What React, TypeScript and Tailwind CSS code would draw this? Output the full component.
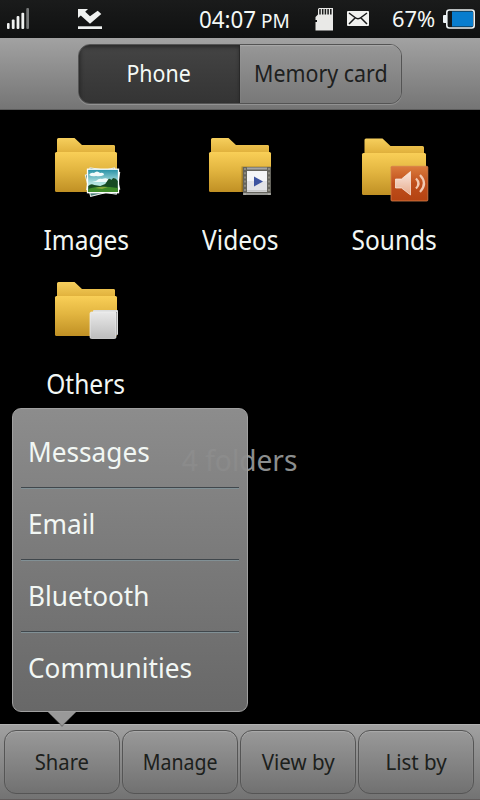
import type { ReactNode } from "react";

function Folder({ uid, tall, children }: { uid: string; tall?: boolean; children: ReactNode }) {
  const b = tall ? 70 : 67;
  const t = tall ? 28 : 27;
  return (
    <svg className="block h-20 w-[120px]" viewBox={tall ? "-5.500 0 120 80" : "-4 0 120 80"} aria-label={uid}>
      <defs>
        <linearGradient id={`${uid}-back`} x1="0" y1="0" x2="0" y2="1">
          <stop offset="0" stopColor="#f6cf5d" />
          <stop offset="0.6" stopColor="#e3b43f" />
          <stop offset="1" stopColor="#c99a30" />
        </linearGradient>
        <linearGradient id={`${uid}-front`} x1="0" y1="0" x2="0" y2="1">
          <stop offset="0" stopColor="#f9cf57" />
          <stop offset="0.45" stopColor="#e2b540" />
          <stop offset="1" stopColor="#c09024" />
        </linearGradient>
      </defs>
      <path
        d={tall ? "M25 15q0-1.500 1.500-1.500H43L51 21H83q1.500 0 1.500 1.500V35H25Z" : "M27 14.500q0-1.500 1.500-1.500H44.500L52 20H84q1 0 1 1.500V35H27Z"}
        fill={`url(#${uid}-back)`}
      />
      <rect x={tall ? 22.5 : 25} y={t} width={tall ? 64 : 62} height={b - t} rx="1.500" fill={`url(#${uid}-front)`} />
      {children}
    </svg>
  );
}

function PhotoBadge() {
  return (
    <g>
      <defs>
        <linearGradient id="sky" x1="0" y1="0" x2="0" y2="1">
          <stop offset="0" stopColor="#238fa5" />
          <stop offset="0.6" stopColor="#b5e5e2" />
        </linearGradient>
      </defs>
      <rect x="57.500" y="46" width="30" height="22" fill="#4a7c78" stroke="#e8ede8" transform="rotate(-14 73 57)" />
      <rect x="58" y="45" width="30" height="22" fill="#4c7a70" stroke="#e8ede8" transform="rotate(9 73 57)" />
      <rect x="57.500" y="44.200" width="31" height="23.500" fill="url(#sky)" stroke="#fff" strokeWidth="1.300" />
      <path d="M59 50q2-3 5-2 3-3 6 0 4-1 4 2-4 2-8 1-4 1-7-1ZM66 56q3-3 6-2 5-2 7 1v2H62Z" fill="#f2fbfa" />
      <path d="M58.200 61q3-3 6-1l6 1 5-2 2-3q2-4 4-1l2-2q3 0 4.600 3V67H58.200Z" fill="#174a22" />
      <path d="M58.200 64q10-4 29.600-1v4H58.200Z" fill="#3e8b28" />
      <path d="M65 63q6-2 13-1l-6 2Z" fill="#87a83b" />
    </g>
  );
}

function FilmBadge() {
  return (
    <g>
      <rect x="57.500" y="41.500" width="31" height="30" fill="#000" opacity="0.250" />
      <rect x="59" y="42" width="28" height="28" fill="#65645d" />
      <path d="M61 43V70M85 43V70" stroke="#99968a" strokeWidth="1.600" strokeDasharray="2 2.200" />
      <rect x="63" y="42.500" width="20" height="2" fill="#a5a5a5" />
      <rect x="63" y="46" width="20" height="19.500" fill="#f4f5f7" />
      <path d="M63 56H83V65.500H63Z" fill="#e2e3e7" />
      <path d="M70 51.500L79 56.500L70 61.500Z" fill="#3d54a0" />
      <path d="M59 69H87M63 66.500H83" stroke="#d0d0d0" />
    </g>
  );
}

function SpeakerBadge() {
  return (
    <g>
      <defs>
        <linearGradient id="orange" x1="0" y1="0" x2="0" y2="1">
          <stop offset="0" stopColor="#dc7c3c" />
          <stop offset="0.5" stopColor="#bf4e1c" />
          <stop offset="1" stopColor="#b44312" />
        </linearGradient>
        <linearGradient id="horn" x1="0" y1="0" x2="0" y2="1">
          <stop offset="0" stopColor="#fae8df" />
          <stop offset="1" stopColor="#e7ab8c" />
        </linearGradient>
      </defs>
      <rect x="51.500" y="41.300" width="36.800" height="34.700" rx="1" fill="url(#orange)" stroke="#d5814c" strokeWidth="0.800" />
      <path d="M56 54H62L71 46.500V70L62 63H56Z" fill="url(#horn)" stroke="#fbeee5" strokeWidth="0.700" />
      <path d="M76.500 53.500q5 5 0 10M80.500 50q8 8.500 0 17" fill="none" stroke="#f2c9b2" strokeWidth="2.200" />
    </g>
  );
}

function PaperBadge() {
  return (
    <g>
      <defs>
        <linearGradient id="paper" x1="0" y1="0" x2="0" y2="1">
          <stop offset="0" stopColor="#e9e9e9" />
          <stop offset="1" stopColor="#bdbdbd" />
        </linearGradient>
      </defs>
      <rect x="63" y="41" width="25" height="25" rx="1" fill="#dcdddd" />
      <path d="M86.500 43V66" stroke="#8c8c8c" />
      <rect x="60" y="43" width="26" height="26.500" rx="1.500" fill="url(#paper)" stroke="#f0f0f0" strokeWidth="0.700" />
    </g>
  );
}

const folders = [
  { name: "Images", badge: <PhotoBadge /> },
  { name: "Videos", badge: <FilmBadge /> },
  { name: "Sounds", badge: <SpeakerBadge />, tall: true },
  { name: "Others", badge: <PaperBadge /> },
];

const menu = ["Messages", "Email", "Bluetooth", "Communities"];

const actions = [
  { name: "Share", fit: "scale-x-[0.940]" },
  { name: "Manage", fit: "scale-x-[0.910]" },
  { name: "View by", fit: "scale-x-[0.955]" },
  { name: "List by", fit: "scale-x-[0.955]" },
];

function StatusBar() {
  return (
    <header className="flex h-[38px] items-center bg-linear-to-b from-[#1a1b1b] to-[#101111] text-[#f4f8f5]">
      <svg className="h-[38px] w-[190px] shrink-0" viewBox="0 0 190 38">
        <g fill="#f0f2f1">
          <rect x="7" y="23" width="2.600" height="6" rx="1" />
          <rect x="11.800" y="19.500" width="2.800" height="9.500" rx="1" />
          <rect x="16.600" y="16" width="2.800" height="13" rx="1" />
          <rect x="21.400" y="12.800" width="2.800" height="16.200" rx="1" />
          <rect x="26.300" y="8" width="2.700" height="21" rx="1" fill="#777979" />
          <path d="M78 9H88L85.200 11.800L90 16.300L97.700 10.800L101.300 14L90 23.700L80.800 15.500L78 18Z" />
          <rect x="78" y="26.300" width="24" height="2.700" />
        </g>
      </svg>
      <div className="flex w-[120px] shrink-0 items-baseline pt-px leading-[38px] whitespace-nowrap">
        <span className="ml-[9px] w-[62px] origin-left scale-x-[0.950] text-[23.500px]">04:07</span>
        <span className="origin-left scale-x-[0.930] text-[20.500px]">PM</span>
      </div>
      <svg className="h-[38px] w-[70px] shrink-0" viewBox="310 0 70 38">
        <path d="M319 8H333V30.500H315.500V22H317V20H315.500V17L318 14.500V9Z" fill="#e9e9e7" />
        <path d="M320 9V14.500M322.700 9V14.500M325.400 9V14.500M328.100 9V14.500M330.800 9V14.500" stroke="#191a1a" strokeWidth="1.500" />
        <rect x="347" y="11" width="22" height="15" rx="1" fill="#f1f1ef" />
        <path d="M349 13L355 17.500Q358 20 361 17.500L367 13M349 24L355 18M367 24L361 18" fill="none" stroke="#191a1a" strokeWidth="1.500" />
      </svg>
      <span className="ml-[12px] w-[50px] shrink-0 origin-left scale-x-[1.020] pt-px text-[21.500px]">67%</span>
      <svg className="h-[38px] w-[38px] shrink-0" viewBox="442 0 38 38">
        <rect x="443" y="15" width="4" height="8" rx="1" fill="#edf3f5" />
        <rect x="446.800" y="10" width="27.400" height="18" rx="2.500" fill="#151819" stroke="#edf3f5" strokeWidth="1.600" />
        <rect x="452" y="11.500" width="21" height="15" fill="#087dce" />
      </svg>
    </header>
  );
}

export default function App() {
  return (
    <div className="relative flex h-[800px] w-[480px] flex-col overflow-hidden bg-black font-['Noto_Sans',sans-serif]">
      <StatusBar />
      <nav className="flex h-[72px] justify-center border-b border-[#5c5c5c] bg-linear-to-b from-[#a2a2a2] to-[#757575] pt-[6px] text-[23px]">
        <div className="flex h-[60px] w-[324px] overflow-hidden rounded-[12px] border border-[#545454] shadow-[0_1px_0_#929292]">
          <div className="flex w-[161px] items-center justify-center border-r border-[#292929] bg-linear-to-b from-[#444] to-[#343434] pb-[2px] text-[#f5faf6] shadow-[inset_1px_2px_4px_#252525]">
            <span className="scale-x-[0.930]">Phone</span>
          </div>
          <div className="flex flex-1 items-center justify-center bg-linear-to-b from-[#979797] to-[#787878] pb-[2px] whitespace-nowrap text-[#1d201e] shadow-[inset_0_1px_1px_#aaa]">
            <span className="scale-x-[0.930]">Memory card</span>
          </div>
        </div>
      </nav>
      <main className="flex flex-1 flex-col">
        <section className="grid grid-cols-3 px-[9px] pt-[15px]">
          {folders.map((f) => (
            <div key={f.name} className="flex h-36 flex-col items-center">
              <Folder uid={f.name} tall={f.tall}>{f.badge}</Folder>
              <span className="mt-[16px] scale-x-[0.925] text-[26.500px] leading-[38px] text-[#f2f7f4]">{f.name}</span>
            </div>
          ))}
        </section>
        <p className="mt-[27px] text-center text-[29px] leading-[40px] text-[#8b8e8e]">
          <span className="inline-block scale-x-[0.970]">4 folders</span>
        </p>
      </main>
      <footer className="flex h-[76px] gap-[2px] border-t border-b border-t-[#b2b2b2] border-b-[#625d5d] bg-linear-to-b from-[#a1a1a1] to-[#737373] pt-[5px] pl-[4px] text-[21.500px] text-[#1c201c]">
        {actions.map((a) => (
          <button key={a.name} className="flex h-16 w-[116px] items-center justify-center rounded-[12px] border border-[#555] bg-linear-to-b from-[#999] to-[#717171] whitespace-nowrap shadow-[inset_0_1px_1px_#aaa]">
            <span className={a.fit}>{a.name}</span>
          </button>
        ))}
      </footer>
      <div className="absolute top-[408px] left-[12px] h-[304px] w-[236px] rounded-[9px] border border-[#a0a0a0] bg-linear-to-b from-[#929292f5] to-[#6c6c6cf5] px-[8px] pt-[8px]">
        <div>
          {menu.map((name) => (
            <div key={name} className="flex h-[72px] items-center border-b border-[#819095] pb-[4px] pl-[7px] text-[28px] text-[#f2f7f4] shadow-[inset_0_-1px_0_#40474c] last:border-transparent last:shadow-none">
              <span className="origin-left scale-x-[0.935]">{name}</span>
            </div>
          ))}
        </div>
        <svg className="absolute top-[303px] left-[34px] h-4 w-[30px]" viewBox="0 0 30 16">
          <path d="M1 0H29L15 15Z" fill="#555" opacity="0.600" />
          <path d="M1 0H29L15 13.500Z" fill="#999" />
        </svg>
      </div>
    </div>
  );
}
